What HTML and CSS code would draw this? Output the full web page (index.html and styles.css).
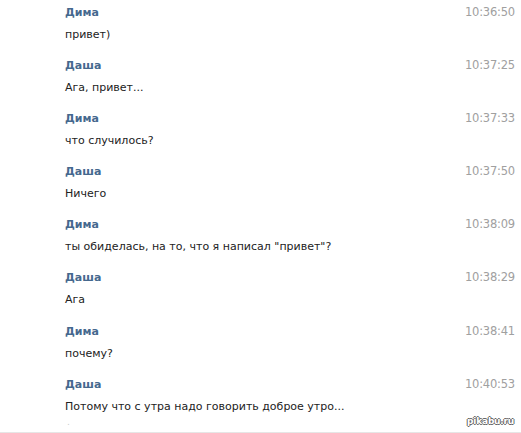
FILE: index.html
```html
<!DOCTYPE html>
<html lang="ru">
<head>
  <meta charset="UTF-8" />
  <title>Диалог</title>
  <link rel="stylesheet" href="styles.css">
</head>
<body>
  <div class="dialog">
    <div class="msg">
      <div class="msg-head"><span class="name">Дима</span><span class="time">10:36:50</span></div>
      <div class="text">привет)</div>
    </div>
    <div class="msg">
      <div class="msg-head"><span class="name">Даша</span><span class="time">10:37:25</span></div>
      <div class="text">Ага, привет...</div>
    </div>
    <div class="msg">
      <div class="msg-head"><span class="name">Дима</span><span class="time">10:37:33</span></div>
      <div class="text">что случилось?</div>
    </div>
    <div class="msg">
      <div class="msg-head"><span class="name">Даша</span><span class="time">10:37:50</span></div>
      <div class="text">Ничего</div>
    </div>
    <div class="msg">
      <div class="msg-head"><span class="name">Дима</span><span class="time">10:38:09</span></div>
      <div class="text">ты обиделась, на то, что я написал "привет"?</div>
    </div>
    <div class="msg">
      <div class="msg-head"><span class="name">Даша</span><span class="time">10:38:29</span></div>
      <div class="text">Ага</div>
    </div>
    <div class="msg">
      <div class="msg-head"><span class="name">Дима</span><span class="time">10:38:41</span></div>
      <div class="text">почему?</div>
    </div>
    <div class="msg">
      <div class="msg-head"><span class="name">Даша</span><span class="time">10:40:53</span></div>
      <div class="text">Потому что с утра надо говорить доброе утро...</div>
    </div>
    <div class="footer">
      <span class="dot">.</span>
      <span class="mark">pikabu.ru</span>
    </div>
  </div>
</body>
</html>
```

FILE: styles.css
```css
* {
  box-sizing: border-box;
  margin: 0;
  padding: 0;
}
body {
  font-family: 'DejaVu Sans', sans-serif;
  font-size: 11px;
  background-color: #fff;
  color: #000;
  width: 521px;
  height: 433px;
  overflow: hidden;
}
.dialog {
  padding: 5px 6px 0 65px;
  height: 433px;
  border-bottom: 1px solid #e6e6e6;
}
.msg {
  height: 53.1px;
}
.msg-head {
  display: flex;
  justify-content: space-between;
  align-items: baseline;
  line-height: 14px;
}
.name {
  color: #45688e;
  font-weight: bold;
}
.time {
  color: #a0a0a0;
  font-size: 11.5px;
  letter-spacing: -0.2px;
}
.text {
  margin-top: 8px;
  line-height: 14px;
  color: #222;
}
.footer {
  display: flex;
  justify-content: space-between;
  align-items: flex-end;
  margin-top: -15px;
  padding: 0 1px 0 2px;
}
.dot {
  color: #ccc;
  font-size: 9px;
}
.mark {
  color: #fff;
  font-size: 9px;
  font-weight: bold;
  line-height: 12px;
  letter-spacing: -0.2px;
  text-shadow: 1px 0 #666, -1px 0 #666, 0 1px #666, 0 -1px #666;
}
```
